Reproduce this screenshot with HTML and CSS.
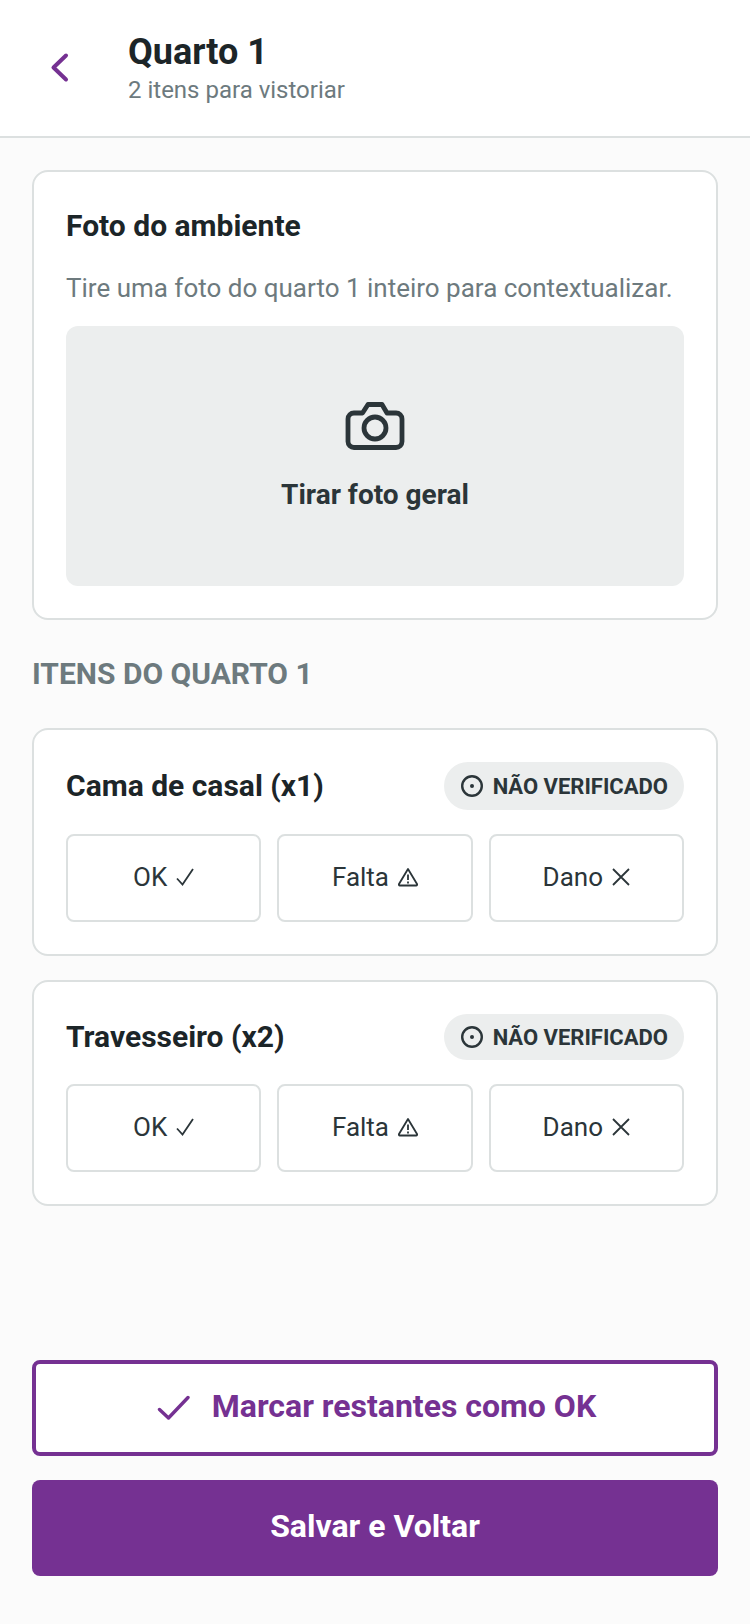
FILE: index.html
```html
<!DOCTYPE html>
<html>
<head>
  <title>Quarto 1</title>
  <link rel="stylesheet" href="styles.css">
</head>
<body>
<div class="page">
  <header class="topbar">
    <button class="back">
      <svg width="24" height="32" viewBox="0 0 24 32"><path d="M17 3.500 4.500 15.500 17 27.500" fill="none" stroke="#753192" stroke-width="4" stroke-linecap="round" stroke-linejoin="round"/></svg>
    </button>
    <div>
      <h1>Quarto 1</h1>
      <p class="sub">2 itens para vistoriar</p>
    </div>
  </header>

  <main class="content">
    <section class="card photo-card">
      <h2>Foto do ambiente</h2>
      <p class="hint">Tire uma foto do quarto 1 inteiro para contextualizar.</p>
      <div class="photo-box">
        <svg width="62" height="50" viewBox="0 0 62 50"><path d="M10 12h8.500L24 3.500h14L43 12h9a6 6 0 0 1 6 6v22.500a6 6 0 0 1-6 6H10a6 6 0 0 1-6-6V18a6 6 0 0 1 6-6z" fill="none" stroke="#2b3539" stroke-width="4.800" stroke-linejoin="round"/><circle cx="31" cy="27" r="11" fill="none" stroke="#2b3539" stroke-width="4.800"/></svg>
        <span>Tirar foto geral</span>
      </div>
    </section>

    <h3 class="section-label">ITENS DO QUARTO 1</h3>

    <section class="card item">
      <div class="item-head">
        <h2>Cama de casal (x1)</h2>
        <span class="badge">
          <svg width="22" height="22" viewBox="0 0 22 22"><circle cx="11" cy="11" r="9.800" fill="none" stroke="#2b3539" stroke-width="2.400"/><circle cx="11" cy="11" r="2" fill="#2b3539"/></svg>
          NÃO VERIFICADO
        </span>
      </div>
      <div class="choices">
        <button class="choice">OK <svg width="18" height="18" viewBox="0 0 18 18"><path d="M1 10.500l5.500 6L17 1" fill="none" stroke="#2b3539" stroke-width="1.800"/></svg></button>
        <button class="choice">Falta <svg width="20" height="20" viewBox="0 0 20 20"><path d="M10 2 19 17a1 1 0 0 1-.8 1.500H1.800A1 1 0 0 1 1 17z" fill="none" stroke="#2b3539" stroke-width="1.800" stroke-linejoin="round"/><path d="M10 7.500v5.500M10 14.500v2" stroke="#2b3539" stroke-width="1.800"/></svg></button>
        <button class="choice">Dano <svg width="18" height="18" viewBox="0 0 18 18"><path d="M1 1l16 16M17 1 1 17" fill="none" stroke="#2b3539" stroke-width="1.800"/></svg></button>
      </div>
    </section>

    <section class="card item">
      <div class="item-head">
        <h2>Travesseiro (x2)</h2>
        <span class="badge">
          <svg width="22" height="22" viewBox="0 0 22 22"><circle cx="11" cy="11" r="9.800" fill="none" stroke="#2b3539" stroke-width="2.400"/><circle cx="11" cy="11" r="2" fill="#2b3539"/></svg>
          NÃO VERIFICADO
        </span>
      </div>
      <div class="choices">
        <button class="choice">OK <svg width="18" height="18" viewBox="0 0 18 18"><path d="M1 10.500l5.500 6L17 1" fill="none" stroke="#2b3539" stroke-width="1.800"/></svg></button>
        <button class="choice">Falta <svg width="20" height="20" viewBox="0 0 20 20"><path d="M10 2 19 17a1 1 0 0 1-.8 1.500H1.800A1 1 0 0 1 1 17z" fill="none" stroke="#2b3539" stroke-width="1.800" stroke-linejoin="round"/><path d="M10 7.500v5.500M10 14.500v2" stroke="#2b3539" stroke-width="1.800"/></svg></button>
        <button class="choice">Dano <svg width="18" height="18" viewBox="0 0 18 18"><path d="M1 1l16 16M17 1 1 17" fill="none" stroke="#2b3539" stroke-width="1.800"/></svg></button>
      </div>
    </section>
  </main>

  <footer class="actions">
    <button class="btn btn-outline">
      <svg width="36" height="36" viewBox="0 0 36 36"><path d="M5.500 21.500l9 8.500L34 9.500" fill="none" stroke="#753192" stroke-width="3.400" stroke-linecap="round" stroke-linejoin="round"/></svg>
      Marcar restantes como OK
    </button>
    <button class="btn btn-solid">Salvar e Voltar</button>
  </footer>
</div>
</body>
</html>
```

FILE: styles.css
```css
* { box-sizing: border-box; }
body { background: #fbfbfb; color: #1c2528; font-family: Roboto, sans-serif; margin: 0; }
h1, h2, h3, p { margin: 0; }
button { font-family: inherit; cursor: pointer; }

.page { height: 1624px; display: flex; flex-direction: column; }

.topbar {
  height: 138px;
  background: #fff;
  border-bottom: 2px solid #dce0e0;
  display: flex;
  align-items: center;
  padding-left: 49px;
  gap: 55px;
}
.back { background: none; border: none; padding: 0; width: 24px; height: 32px; }
h1 { font-size: 36px; font-weight: 700; line-height: 44px; }
.sub { font-size: 24px; line-height: 32px; color: #6d7a7e; }

.content { flex: 1; padding: 32px 32px 0; }

.card {
  background: #fff;
  border: 2px solid #dce0e0;
  border-radius: 16px;
  padding: 32px;
}
.card h2 { font-size: 30px; font-weight: 700; line-height: 44px; }
.hint { font-size: 26px; line-height: 36px; color: #6d7a7e; margin-top: 22px; }

.photo-box {
  height: 260px;
  margin-top: 20px;
  background: #eceeee;
  border-radius: 12px;
  display: flex;
  flex-direction: column;
  align-items: center;
  justify-content: center;
  gap: 27px;
  font-size: 28px;
  font-weight: 700;
  color: #2b3539;
}

.section-label { font-size: 30px; font-weight: 700; line-height: 36px; color: #6d7a7e; margin: 36px 0 36px; }

.item { margin-bottom: 24px; }
.item-head { display: flex; align-items: center; justify-content: space-between; height: 46px; }
.section-label + .item .item-head { height: 48px; }
.badge {
  display: flex;
  align-items: center;
  gap: 10px;
  height: 100%;
  padding: 0 16px 0 17px;
  border-radius: 24px;
  background: #eceeee;
  color: #2b3539;
  font-size: 22px;
  font-weight: 700;
}
.choices { display: grid; grid-template-columns: repeat(3, 1fr); gap: 16px; margin-top: 24px; }
.choice {
  height: 88px;
  padding: 0 0 3px;
  background: #fff;
  border: 2px solid #dce0e0;
  border-radius: 8px;
  color: #2b3539;
  font-size: 26px;
  display: flex;
  align-items: center;
  justify-content: center;
  gap: 9px;
}

.actions { padding: 0 32px 48px; display: flex; flex-direction: column; gap: 24px; }
.btn {
  height: 96px;
  padding: 0 0 4px;
  border-radius: 8px;
  font-size: 32px;
  font-weight: 700;
  display: flex;
  align-items: center;
  justify-content: center;
  gap: 22px;
}
.btn-outline { background: #fff; border: 4px solid #753192; color: #753192; }
.btn-solid { background: #753192; border: none; color: #fff; }
```
